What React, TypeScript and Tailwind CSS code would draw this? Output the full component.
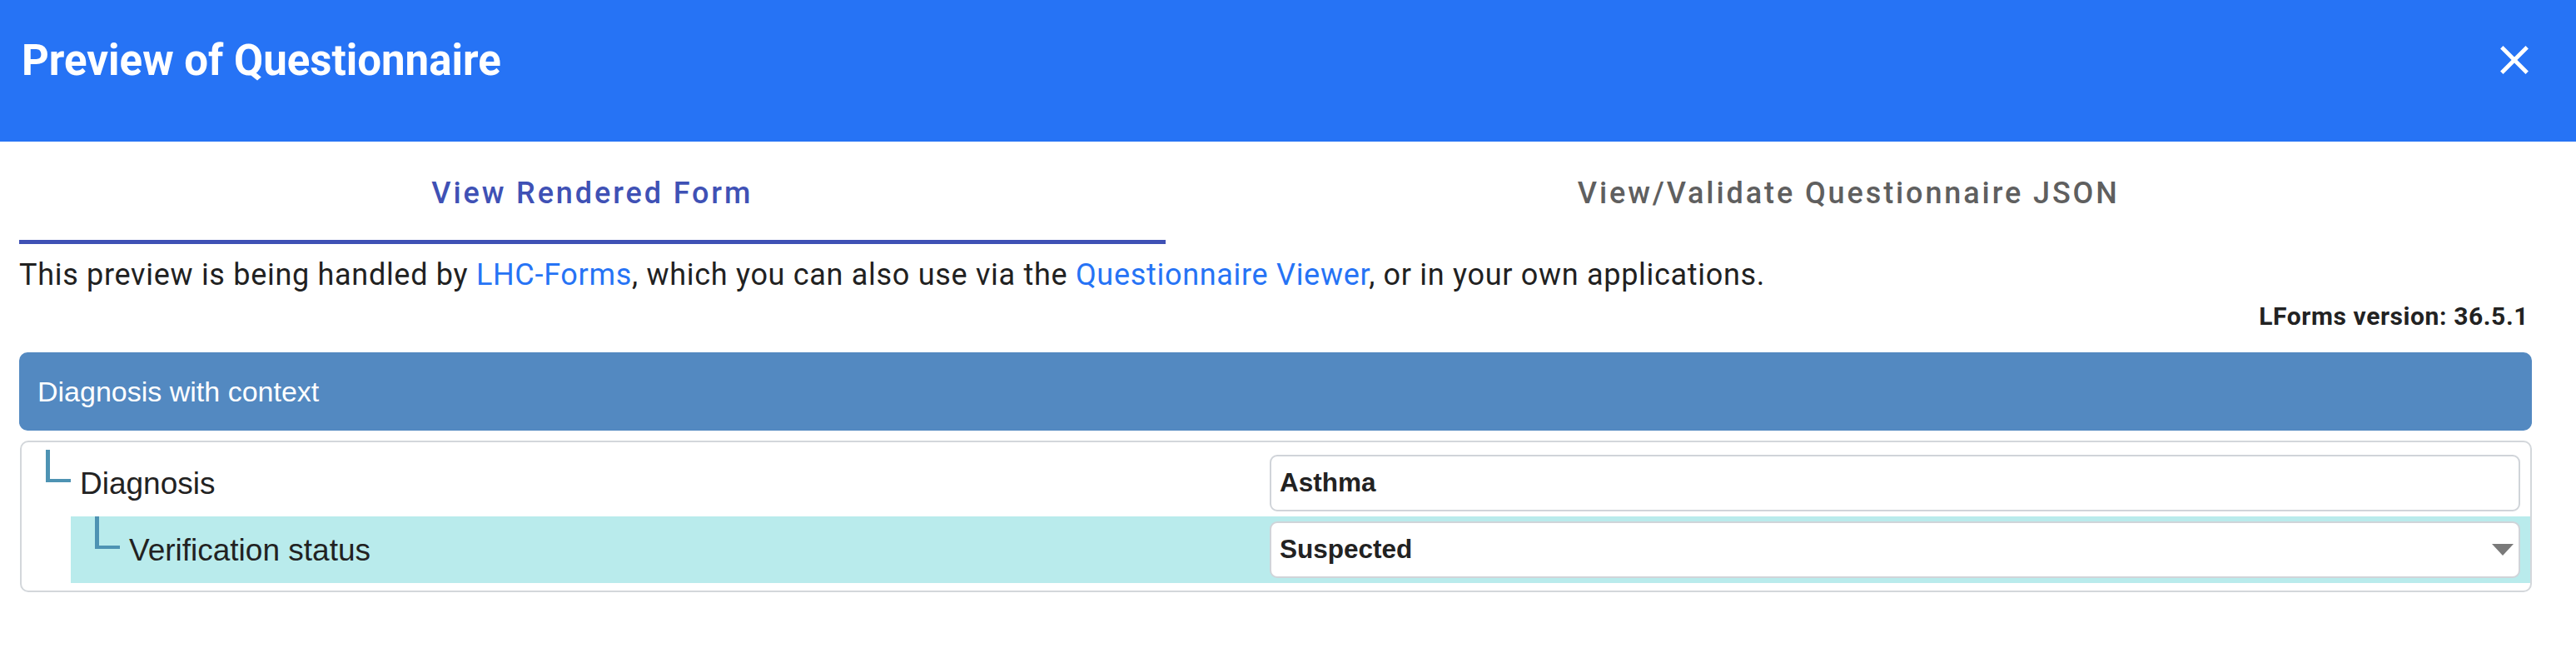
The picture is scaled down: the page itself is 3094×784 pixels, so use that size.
import React from "react";

const roboto = { fontFamily: "Roboto, 'Liberation Sans', sans-serif" };

function CloseIcon() {
  return (
    <svg viewBox="0 0 24 24" className="w-[58px] h-[58px]" fill="white">
      <path d="M19 6.41L17.59 5 12 10.59 6.41 5 5 6.41 10.59 12 5 17.59 6.41 19 12 13.41 17.59 19 19 17.59 13.41 12z" />
    </svg>
  );
}

function TreeLine() {
  // the little "L" connector in front of each item
  return (
    <div className="ml-[29px] w-[30px] h-[39px] shrink-0 self-start border-l-[5px] border-b-[4px] border-[#4e93b3]" />
  );
}

function Row({
  label,
  value,
  indent,
  highlight,
  select,
}: {
  label: string;
  value: string;
  indent?: boolean;
  highlight?: boolean;
  select?: boolean;
}) {
  return (
    <div
      className={`flex h-[80px] ${indent ? "ml-[59px]" : ""} ${
        highlight ? "bg-[#b9ebec]" : ""
      }`}
    >
      <div className="flex flex-1 items-center min-w-0">
        <TreeLine />
        <span className="ml-[11px] text-[37px] leading-none text-[#222]">{label}</span>
      </div>
      <div className="w-[1514px] shrink-0 pr-[12px] flex items-center">
        <div className="w-full h-[68px] bg-white border-2 border-[#d0d4d9] rounded-[9px] flex items-center justify-between pl-[10px] pr-[6px]">
          <span className="text-[31.5px] leading-none font-bold text-[#222]">{value}</span>
          {select && (
            <svg viewBox="0 0 26 16" className="w-[26px] h-[16px]">
              <polygon points="0,1 26,1 13,15" fill="#7a7a7a" />
            </svg>
          )}
        </div>
      </div>
    </div>
  );
}

export default function App() {
  return (
    <div className="w-full min-h-screen bg-white" style={roboto}>
      {/* Dialog title bar */}
      <div className="h-[170px] bg-[#2673f5]">
        <div className="h-[144px] flex items-center justify-between pl-[26px] pr-[45px]">
          <h1 className="text-[51px] font-bold text-white leading-none">
            Preview of Questionnaire
          </h1>
          <CloseIcon />
        </div>
      </div>

      <div className="pl-[23px] pr-[53px]">
        {/* Tabs */}
        <div className="flex h-[123px]">
          <div className="grow flex items-center justify-center pt-[5px] border-b-[5px] border-[#3f51b5]">
            <span className="text-[36px] font-medium tracking-[2.9px] text-[#3f51b5]">
              View Rendered Form
            </span>
          </div>
          <div className="grow flex items-center justify-center pt-[5px] border-b-[5px] border-transparent">
            <span className="text-[36px] font-medium tracking-[2.9px] text-[#5f5f5f]">
              View/Validate Questionnaire JSON
            </span>
          </div>
        </div>

        <p className="mt-[17px] text-[36px] leading-[41px] tracking-[0.7px] text-[#212121]">
          This preview is being handled by{" "}
          <a className="text-[#2673f5]">LHC-Forms</a>, which you can also use
          via the <a className="text-[#2673f5]">Questionnaire Viewer</a>, or in
          your own applications.
        </p>

        <div className="mt-[11px] pr-[4px] text-right text-[30px] leading-[35px] font-bold tracking-[0.6px] text-[#222]">
          LForms version: 36.5.1
        </div>

        {/* Rendered form */}
        <div className="mt-[26px]" style={{ fontFamily: "'Liberation Sans', Arial, sans-serif" }}>
          <div className="h-[94px] rounded-[10px] bg-[#5389c1] flex items-center pl-[22px]">
            <span className="text-[34px] text-white">Diagnosis with context</span>
          </div>
          <div className="mt-[12px] ml-[1px] border-2 border-[#d3d7db] rounded-[10px] py-[9px]">
            <Row label="Diagnosis" value="Asthma" />
            <Row
              label="Verification status"
              value="Suspected"
              indent
              highlight
              select
            />
          </div>
        </div>
      </div>
    </div>
  );
}
